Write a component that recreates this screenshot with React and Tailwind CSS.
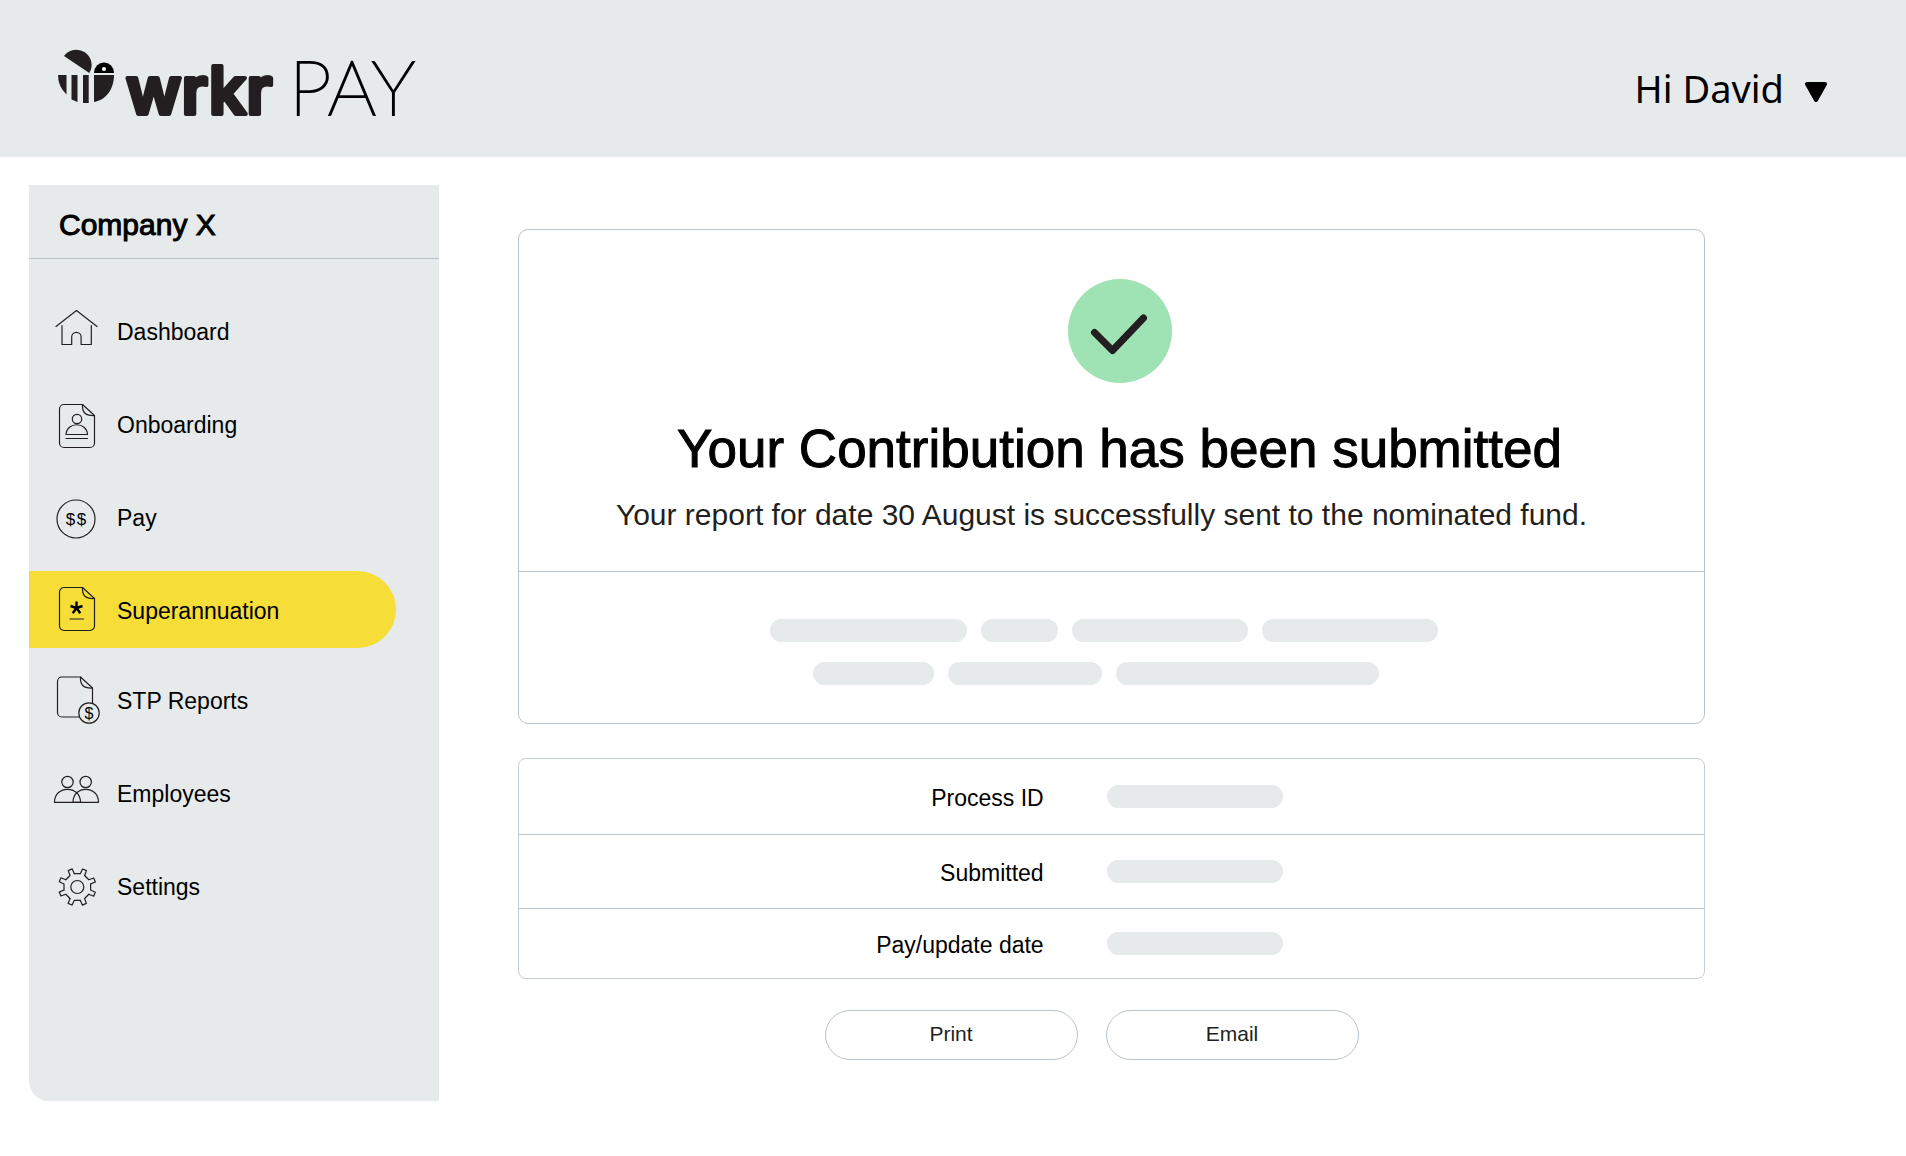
import React, { useState } from 'react';

const BeeLogo = () => (
  <svg viewBox="0 0 364 76" className="w-[364px] h-[76px] overflow-visible" role="img" aria-label="wrkr PAY">
    {/* wing */}
    <path d="M6 16 A15.250 15.250 0 0 1 31.300 33 Z" fill="#231f20" />
    {/* head */}
    <path d="M36 33 A10 10.500 0 0 1 56 33 Z" fill="#000" />
    <circle cx="46" cy="29" r="2" fill="#fff" />
    {/* striped body */}
    <path d="M0 35 H8.500 V54.500 A27 27 0 0 1 0 35 Z" fill="#231f20" />
    <path d="M13.500 35 H19.500 V62 L13.500 59.500 Z" fill="#231f20" />
    <path d="M25 35 H30.700 V63 H25 Z" fill="#231f20" />
    <path d="M36 35 H56 C56 49 48 60 36 62 Z" fill="#231f20" />
    <text
      x="68"
      y="74"
      fontFamily="Inter, sans-serif"
      fontSize="66"
      fontWeight="600"
      fill="#231f20"
      stroke="#231f20"
      strokeWidth="4"
      strokeLinejoin="round"
    >
      wrkr
    </text>
    <text
      x="231"
      y="75"
      fontFamily="Lato, sans-serif"
      fontSize="76"
      fontWeight="100"
      fill="#000"
      stroke="#000"
      strokeWidth="2"
    >
      PAY
    </text>
  </svg>
);

const Icon = ({ children }) => (
  <svg
    viewBox="0 1 48 48"
    className="w-12 h-12 shrink-0 overflow-visible"
    fill="none"
    stroke="#231f20"
    strokeWidth="1.2"
    strokeLinecap="round"
    strokeLinejoin="round"
    aria-hidden="true"
  >
    {children}
  </svg>
);

const Dollar = ({ x, y, size }) => (
  <text
    x={x}
    y={y}
    fontSize={size}
    textAnchor="middle"
    fontFamily="Liberation Sans, Arial, sans-serif"
    fill="#000"
    stroke="none"
  >
    $
  </text>
);

const HomeIcon = () => (
  <Icon>
    <path d="M4 20.500 L24.500 4.500 L45 20.500" />
    <path d="M10 19.500 V38.500 H19.700 V31 a4.700 4.700 0 0 1 9.400 0 V38.500 H39.300 V19.500" />
  </Icon>
);

const OnboardingIcon = () => (
  <Icon>
    <path d="M30.500 5.500 H12 a4.500 4.500 0 0 0 -4.500 4.500 V44 a4.500 4.500 0 0 0 4.500 4.500 H38 a4.500 4.500 0 0 0 4.500 -4.500 V16.500 Z" />
    <path d="M30.500 5.500 C30 13 33 17 42.500 16.500" />
    <circle cx="25" cy="20" r="4.700" />
    <path d="M14 35.500 C14.500 22.500 35 22.500 35.500 35.500 Z" />
    <path d="M14 39.500 H35.500" />
  </Icon>
);

const PayIcon = () => (
  <Icon>
    <circle cx="24" cy="27" r="19" />
    <Dollar x={18.5} y={33} size={17} />
    <Dollar x={29.5} y={33} size={17} />
  </Icon>
);

const SuperIcon = () => (
  <Icon>
    <path d="M30.500 2.500 H12 a4.500 4.500 0 0 0 -4.500 4.500 V41 a4.500 4.500 0 0 0 4.500 4.500 H38 a4.500 4.500 0 0 0 4.500 -4.500 V13.500 Z" />
    <path d="M30.500 2.500 C30 10 33 14 42.500 13.500" />
    <path
      d="M24.500 23 V16.500 M24.500 23 L30.500 21 M24.500 23 L28.300 28.200 M24.500 23 L20.700 28.200 M24.500 23 L18.500 21"
      stroke="#000"
      strokeWidth="2.400"
      strokeLinecap="butt"
    />
    <path d="M18 34 H31.500" />
  </Icon>
);

const ReportsIcon = () => (
  <Icon>
    <path d="M27.500 42 H10 a4.500 4.500 0 0 1 -4.500 -4.500 V6.500 a4.500 4.500 0 0 1 4.500 -4.500 H28.500 L40.500 13 V28" />
    <path d="M28.500 2 C28 9.500 31 13.500 40.500 13" />
    <circle cx="37" cy="38" r="10.200" />
    <Dollar x={37} y={43.5} size={16} />
  </Icon>
);

const EmployeesIcon = () => (
  <Icon>
    <circle cx="15.500" cy="14" r="5.700" />
    <circle cx="33.700" cy="14" r="5.700" />
    <path d="M2.500 34.300 C2.500 17 28.500 17 28.500 34.300 Z" />
    <path d="M21 34.300 C21 17 46.500 17 46.500 34.300 Z" />
  </Icon>
);

const SettingsIcon = () => (
  <Icon>
    <g transform="translate(25.3 26)">
      <circle r="6.500" />
      {[0, 45, 90, 135, 180, 225, 270, 315].map(angle => (
        <path
          key={angle}
          d="M-3 -13.300 H3 L5.200 -18 L9.200 -16.400 L7.300 -11.500"
          transform={`rotate(${angle})`}
        />
      ))}
    </g>
  </Icon>
);

const navGroups = [
  [
    { name: 'Dashboard', icon: HomeIcon },
    { name: 'Onboarding', icon: OnboardingIcon },
    { name: 'Pay', icon: PayIcon },
    { name: 'Superannuation', icon: SuperIcon },
  ],
  [
    { name: 'STP Reports', icon: ReportsIcon },
    { name: 'Employees', icon: EmployeesIcon },
    { name: 'Settings', icon: SettingsIcon },
  ],
];

const details = [
  { label: 'Process ID', height: 'h-[75px]' },
  { label: 'Submitted', height: 'h-[74px]' },
  { label: 'Pay/update date', height: 'h-[70px]' },
];

// Placeholder pill, the width comes from the caller
const Bar = ({ width }) => <div className={`${width} h-[23px] rounded-full bg-[#e6eaea]`} />;

export default function App() {
  const [active, setActive] = useState('Superannuation');

  return (
    <div className="min-h-screen bg-white text-black font-['Liberation_Sans',Arial,sans-serif]">
      {/* Header */}
      <header className="flex items-start justify-between h-[157px] bg-[#e6eaea] pl-[58px] pr-[78px]">
        <a href="#" className="mt-10">
          <BeeLogo />
        </a>
        <button className="flex items-center gap-5 mt-[61px] text-[38px] leading-[54px] font-['Noto_Sans',sans-serif]">
          Hi David
          <svg viewBox="0 0 24 22" className="w-6 h-[22px] mt-2" aria-hidden="true">
            <path d="M3 3 H21 L12 19 Z" stroke="#000" strokeWidth="4" strokeLinejoin="round" />
          </svg>
        </button>
      </header>

      <div className="flex items-start pt-7 pl-[29px]">
        {/* Sidebar */}
        <aside className="w-[410px] min-h-[916px] shrink-0 rounded-bl-[20px] bg-[#e6eaea]">
          <h2 className="h-[74px] border-b border-[#b7c2ca] pl-[30px] pt-[22px] text-[30px] leading-9 [-webkit-text-stroke:1px]">
            Company X
          </h2>
          <nav className="flex flex-col gap-[13px] pt-[33px] pr-[43px]">
            {navGroups.map((group, index) => (
              <ul key={index} className="flex flex-col gap-4">
                {group.map(({ name, icon: ItemIcon }) => (
                  <li key={name}>
                    <a
                      href="#"
                      onClick={() => setActive(name)}
                      className={`flex items-center gap-[17px] h-[77px] pl-[23px] rounded-r-full ${
                        active === name ? 'bg-[#f6dd38]' : ''
                      }`}
                    >
                      <ItemIcon />
                      <span className="pt-0.5 text-[23px] leading-7">{name}</span>
                    </a>
                  </li>
                ))}
              </ul>
            ))}
          </nav>
        </aside>

        {/* Content */}
        <main className="flex-1 pt-11 pl-[79px] pr-[201px]">
          <section className="rounded-[10px] border border-[#b7c2ca]">
            <div className="flex flex-col items-center border-b border-[#b7c2ca] pt-[49px] pb-[38px]">
              <div className="flex flex-col items-center pl-4">
                <svg viewBox="0 0 104 104" className="w-[104px] h-[104px]" aria-hidden="true">
                  <circle cx="52" cy="52" r="52" fill="#9fe2b4" />
                  <path
                    d="M26.500 53.500 L44.500 71.500 L75.500 39"
                    fill="none"
                    stroke="#231f20"
                    strokeWidth="7"
                    strokeLinecap="round"
                    strokeLinejoin="round"
                  />
                </svg>
                <h1 className="mt-[34px] text-[53px] leading-[64px] [-webkit-text-stroke:1px]">
                  Your Contribution has been submitted
                </h1>
              </div>
              <p className="mt-4 pr-5 text-[30px] leading-9 text-[#231f20]">
                Your report for date 30 August is successfully sent to the nominated fund.
              </p>
            </div>
            <div className="flex flex-col items-center gap-5 pt-[47px] pb-[38px]">
              <div className="flex gap-3.5 pr-4">
                <Bar width="w-[197px]" />
                <Bar width="w-[77px]" />
                <Bar width="w-[176px]" />
                <Bar width="w-[176px]" />
              </div>
              <div className="flex gap-3.5 pr-8">
                <Bar width="w-[121px]" />
                <Bar width="w-[154px]" />
                <Bar width="w-[263px]" />
              </div>
            </div>
          </section>

          <section className="mt-[34px] rounded-lg border border-[#c4cdd3]">
            <table className="w-full">
              <tbody className="divide-y divide-[#b7c2ca]">
                {details.map(({ label, height }) => (
                  <tr key={label} className={height}>
                    <th scope="row" className="w-4/9 pt-1 pr-0.5 text-right text-[23px] leading-7 font-normal">
                      {label}
                    </th>
                    <td className="pl-[61px]">
                      <Bar width="w-[176px]" />
                    </td>
                  </tr>
                ))}
              </tbody>
            </table>
          </section>

          <div className="flex justify-center gap-7 mt-[31px] pr-10 text-[21px] text-[#231f20]">
            <button className="w-[253px] h-[50px] pb-0.5 rounded-full border border-[#b7c2ca]">Print</button>
            <button className="w-[253px] h-[50px] pb-0.5 rounded-full border border-[#b7c2ca]">Email</button>
          </div>
        </main>
      </div>
    </div>
  );
}
